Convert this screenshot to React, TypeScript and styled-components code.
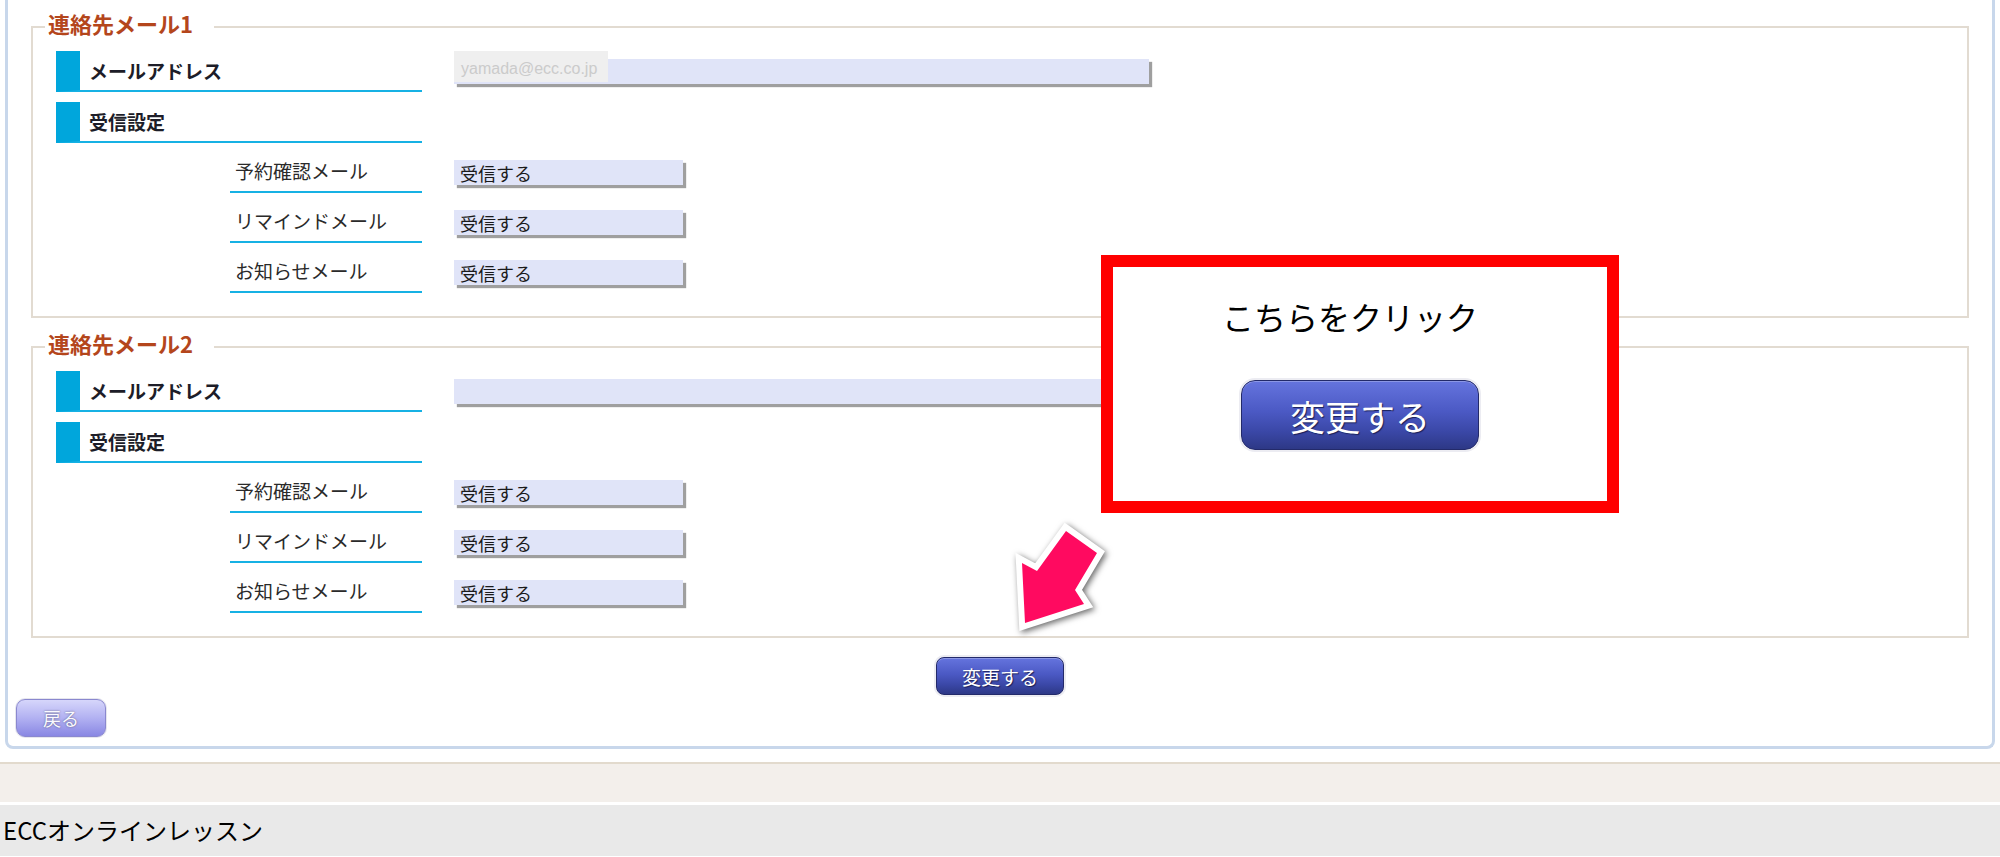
import React from "react";
import styled, { createGlobalStyle } from "styled-components";

const GlobalStyle = createGlobalStyle`
  html, body { margin: 0; padding: 0; background: #ffffff; }
  body {
    font-family: "Noto Sans CJK JP", "Noto Sans", sans-serif;
    color: #222;
  }
  * { box-sizing: border-box; }
`;

const Page = styled.div`
  position: relative;
  width: 2000px;
  height: 857px;
  overflow: hidden;
`;

const Panel = styled.div`
  margin: 0 5px;
  padding: 9px 0 9px 0;
  border: 3px solid #c8d7eb;
  border-top: 0;
  border-radius: 0 0 8px 8px;
`;

const Fieldset = styled.fieldset<{ $gap?: number }>`
  margin: ${(p) => p.$gap ?? 0}px 23px 0 23px;
  padding: 6px 0 23px 12px;
  border: 2px solid #e2dbd1;
  min-width: 0;
`;

const Legend = styled.legend`
  padding: 0 21px 8px 3px;
  font-size: 22px;
  line-height: 28px;
  font-weight: bold;
  color: #b4461c;
`;

const HeaderRow = styled.div`
  display: flex;
  align-items: flex-start;
  margin-left: 11px;
  height: 41px;
  & + & {
    margin-top: 10px;
  }
`;

const HeaderLabel = styled.div`
  width: 366px;
  height: 41px;
  display: flex;
  align-items: center;
  padding-left: 9px;
  border-left: 24px solid #00a6dc;
  border-bottom: 2px solid #16b1e4;
  font-size: 19px;
  font-weight: bold;
  color: #1d1d28;
`;

const SubRow = styled.div`
  display: flex;
  align-items: flex-start;
  margin-left: 185px;
  height: 50px;
`;

const SubLabel = styled.div`
  width: 192px;
  height: 50px;
  display: flex;
  align-items: center;
  padding: 6px 0 0 5px;
  border-bottom: 2px solid #16b1e4;
  font-size: 19px;
  color: #2a2a2a;
`;

const ValueWrap = styled.div<{ $top: number }>`
  position: relative;
  margin-left: 32px;
  margin-top: ${(p) => p.$top}px;
`;

const ValueBox = styled.div<{ $w: number }>`
  width: ${(p) => p.$w}px;
  height: 25px;
  background: #e0e4f8;
  box-shadow: 3px 3px 1px #9f9f9f;
  display: flex;
  align-items: center;
  padding-left: 6px;
  font-size: 18px;
  color: #1a1a1a;
`;

const Ghost = styled.div`
  position: absolute;
  left: 0;
  top: -8px;
  width: 154px;
  height: 31px;
  background: #efefef;
  color: #cbcbcb;
  font-family: "Liberation Sans", Arial, sans-serif;
  font-size: 16px;
  line-height: 31px;
  padding-left: 7px;
  padding-top: 2px;
`;

const CenterRow = styled.div`
  display: flex;
  justify-content: center;
  margin-top: 19px;
`;

const BackRow = styled.div`
  display: flex;
  margin-top: 4px;
  padding-left: 8px;
`;

const NavyButton = styled.button<{ $w: number; $h: number; $fs: number; $r: number }>`
  width: ${(p) => p.$w}px;
  height: ${(p) => p.$h}px;
  border-radius: ${(p) => p.$r}px;
  border: 1px solid #232a6a;
  background: linear-gradient(180deg, #6574de 0%, #4b59c4 45%, #3a47a6 75%, #2d3886 100%);
  box-shadow: 0 0 0 2px #ececf2, inset 0 1px 0 rgba(255, 255, 255, 0.25);
  color: #ffffff;
  font-family: "Noto Sans CJK JP", sans-serif;
  font-size: ${(p) => p.$fs}px;
  line-height: 1;
  padding: 0;
  text-shadow: 1px 1px 1px #1a2058;
  cursor: pointer;
`;

const BackButton = styled.button`
  width: 90px;
  height: 38px;
  border-radius: 9px;
  border: 1px solid #8a88cf;
  background: linear-gradient(180deg, #d6d6fb 0%, #b2b1f2 50%, #8987e3 100%);
  box-shadow: 0 0 0 1px #e6e6ee;
  color: #fafaff;
  font-family: "Noto Sans CJK JP", sans-serif;
  font-size: 18px;
  padding: 0;
  text-shadow: 0 0 2px #5a5a7a;
  cursor: pointer;
`;

const Gap = styled.div`
  height: 13px;
`;

const BeigeBand = styled.div`
  height: 40px;
  border-top: 2px solid #e2dacd;
  background: #f3efeb;
`;

const WhiteLine = styled.div`
  height: 3px;
  background: #ffffff;
`;

const Footer = styled.div`
  height: 51px;
  background: #e9e9e9;
  display: flex;
  align-items: center;
  padding: 0 0 2px 3px;
  font-size: 24px;
  color: #000;
`;

const Callout = styled.div`
  position: absolute;
  left: 1101px;
  top: 255px;
  width: 518px;
  height: 258px;
  border: 12px solid #ff0000;
  background: #ffffff;
  display: flex;
  flex-direction: column;
  align-items: center;
  padding-top: 29px;
`;

const CalloutText = styled.div`
  font-size: 32px;
  line-height: 40px;
  color: #000;
  padding-right: 20px;
  margin-bottom: 44px;
`;

const ArrowSvg = styled.svg`
  position: absolute;
  left: 985px;
  top: 495px;
  overflow: visible;
  filter: drop-shadow(2px 2px 3px rgba(0, 0, 0, 0.6));
`;

type Sub = { label: string; value: string };
const subs: Sub[] = [
  { label: "予約確認メール", value: "受信する" },
  { label: "リマインドメール", value: "受信する" },
  { label: "お知らせメール", value: "受信する" },
];

function ContactSet({ title, email, gap }: { title: string; email?: string; gap?: number }) {
  return (
    <Fieldset $gap={gap}>
      <Legend>{title}</Legend>
      <HeaderRow>
        <HeaderLabel>メールアドレス</HeaderLabel>
        <ValueWrap $top={8}>
          <ValueBox $w={695} />
          {email && <Ghost>{email}</Ghost>}
        </ValueWrap>
      </HeaderRow>
      <HeaderRow>
        <HeaderLabel>受信設定</HeaderLabel>
      </HeaderRow>
      {subs.map((s) => (
        <SubRow key={s.label}>
          <SubLabel>{s.label}</SubLabel>
          <ValueWrap $top={17}>
            <ValueBox $w={229}>{s.value}</ValueBox>
          </ValueWrap>
        </SubRow>
      ))}
    </Fieldset>
  );
}

export default function App() {
  return (
    <>
      <GlobalStyle />
      <Page>
        <Panel>
          <ContactSet title="連絡先メール1" email="yamada@ecc.co.jp" />
          <ContactSet title="連絡先メール2" gap={11} />
          <CenterRow>
            <NavyButton $w={128} $h={38} $fs={19} $r={8}>
              変更する
            </NavyButton>
          </CenterRow>
          <BackRow>
            <BackButton>戻る</BackButton>
          </BackRow>
        </Panel>
        <Gap />
        <BeigeBand />
        <WhiteLine />
        <Footer>ECCオンラインレッスン</Footer>

        <Callout>
          <CalloutText>こちらをクリック</CalloutText>
          <NavyButton $w={238} $h={70} $fs={35} $r={14}>
            変更する
          </NavyButton>
        </Callout>

        <ArrowSvg width="150" height="150" viewBox="0 0 150 150">
          <polygon
            points="81,36 112,58 90,95 99,109 40,128 37,68 52,76"
            fill="#ff0a60"
            stroke="#ffffff"
            strokeWidth="12"
            strokeLinejoin="miter"
            strokeMiterlimit="3"
            paintOrder="stroke"
          />
        </ArrowSvg>
      </Page>
    </>
  );
}
